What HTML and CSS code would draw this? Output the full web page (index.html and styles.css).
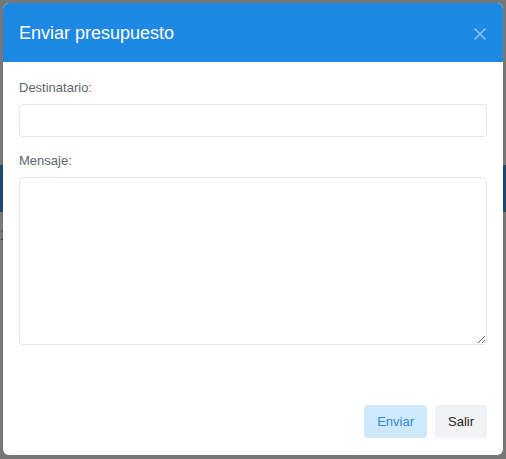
FILE: index.html
```html
<!DOCTYPE html>
<html lang="es">
<head>
    <meta charset="UTF-8">
    <meta name="viewport" content="width=device-width, initial-scale=1.0">
    <title>Enviar presupuesto</title>
    <link rel="stylesheet" href="styles.css">
</head>
<body>
    <div class="pageband"></div>
    <div class="pagenum">1</div>
    <div class="modal">
        <div class="modalheader">
            <div class="modaltitle">Enviar presupuesto</div>
            <button class="closebutton" type="button" aria-label="Cerrar">
                <svg width="12" height="12" viewBox="0 0 12 12">
                    <path d="M0.5 0.5 L11.5 11.5 M11.5 0.5 L0.5 11.5" stroke="currentColor" stroke-width="1.4" fill="none"/>
                </svg>
            </button>
        </div>
        <div class="modalbody">
            <label class="fieldlabel" for="recipient">Destinatario:</label>
            <input type="text" id="recipient" class="fieldinput">
            <label class="fieldlabel" for="message">Mensaje:</label>
            <textarea id="message" class="fieldtext"></textarea>
        </div>
        <div class="modalfooter">
            <button type="button" class="btn btnsend">Enviar</button>
            <button type="button" class="btn btnexit">Salir</button>
        </div>
    </div>
</body>
</html>
```
FILE: styles.css
```css
body {
    font-family: "Liberation Sans", Arial, sans-serif;
    margin: 0;
    padding: 3px;
    background-color: #777;
    height: 459px;
    box-sizing: border-box;
    overflow: hidden;
    position: relative;
}

/* page under the dimmed overlay */
.pageband {
    position: absolute;
    left: 0;
    right: 0;
    top: 165px;
    height: 47px;
    background-color: #1d4a70;
}

.pagenum {
    position: absolute;
    left: 0;
    top: 227px;
    font-size: 14px;
    color: #333;
}

.modal {
    position: relative;
    width: 500px;
    height: 452px;
    background-color: #fff;
    border-radius: 6px;
    display: flex;
    flex-direction: column;
    overflow: hidden;
}

.modalheader {
    height: 59px;
    background-color: #1e88e5;
    padding: 0 16px;
    display: flex;
    align-items: center;
    justify-content: space-between;
    flex-shrink: 0;
}

.modaltitle {
    color: #fff;
    font-size: 18px;
    padding-top: 1px;
}

.closebutton {
    background: none;
    border: 0;
    padding: 0;
    margin-right: 1px;
    color: rgba(255, 255, 255, 0.55);
    display: flex;
    margin-top: 2px;
}

.modalbody {
    padding: 18px 16px 0;
    display: flex;
    flex-direction: column;
    flex: 1;
}

.fieldlabel {
    font-size: 13px;
    line-height: 16px;
    color: #5d6670;
    margin-bottom: 8px;
}

.fieldinput,
.fieldtext {
    width: 100%;
    box-sizing: border-box;
    border: 1px solid #e6e6e6;
    border-radius: 4px;
    font-family: inherit;
    font-size: 13px;
    padding: 6px 10px;
}

.fieldinput {
    height: 33px;
    margin-bottom: 16px;
}

.fieldtext {
    height: 168px;
    resize: vertical;
}

.modalfooter {
    display: flex;
    justify-content: flex-end;
    gap: 8px;
    padding: 0 16px 17px;
}

.btn {
    height: 33px;
    padding: 0 13px;
    border: 0;
    border-radius: 4px;
    font-family: inherit;
    font-size: 13px;
}

.btnsend {
    background-color: #d0e8fc;
    color: #2f8ae0;
}

.btnexit {
    background-color: #f1f2f6;
    color: #222;
}
```
